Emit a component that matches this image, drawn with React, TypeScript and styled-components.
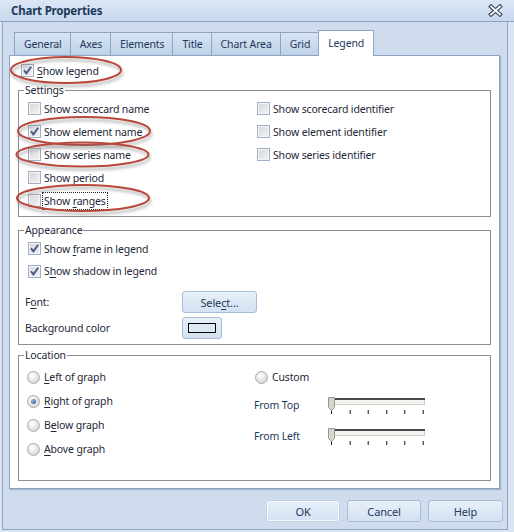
import React from "react";
import styled, { createGlobalStyle, css } from "styled-components";

const FONT = `"Noto Sans", "Open Sans", "DejaVu Sans", sans-serif`;
const INK = "#1d2838";
const NAVY = "#1e395b";
const EDGE = "#8ea4c2";

const GlobalStyle = createGlobalStyle`
  html, body { margin: 0; padding: 0; background: #d9e4f1; }
  body { font-family: ${FONT}; font-size: 10.5px; letter-spacing: -0.15px; color: ${INK}; }
  * { box-sizing: border-box; }
`;

const Window = styled.div`
  position: relative;
  width: 514px;
  height: 532px;
  display: flex;
  flex-direction: column;
  background: #dbe5f2;
  overflow: hidden;
`;

const TitleBar = styled.div`
  flex: none;
  height: 22px;
  display: flex;
  align-items: center;
  justify-content: space-between;
  padding: 0 11px;
  border-bottom: 1px solid ${EDGE};
  background: linear-gradient(#dce7f5, #c7d8ee);
  color: ${NAVY};
  font-weight: bold;
  font-size: 11.5px;
  letter-spacing: -0.2px;
`;

const Frame = styled.div`
  flex: 1;
  display: flex;
  flex-direction: column;
  margin: 0 6px 2px 2px;
  padding: 8px 0 0 6px;
  border: 1px solid ${EDGE};
  border-top: none;
  background: #cfdcee;
`;

const TabRow = styled.div`
  display: flex;
  align-items: flex-end;
  height: 25px;
  margin-left: 6px;
  position: relative;
  z-index: 1;
`;

const Tab = styled.div<{ $active?: boolean }>`
  height: 23px;
  display: flex;
  align-items: center;
  padding: 0 8px 0 9px;
  margin-left: -1px;
  border: 1px solid ${EDGE};
  border-bottom: none;
  background: linear-gradient(#d8e4f3, #bfd2ea);
  color: ${NAVY};
  ${(p) =>
    p.$active &&
    css`
      height: 26px;
      margin-bottom: -1px;
      padding: 0 9px 2px;
      background: #fff;
    `}
`;

const Panel = styled.div`
  height: 434px;
  margin-right: 7px;
  padding: 3px 8px 0;
  display: flex;
  flex-direction: column;
  background: #fff;
  border: 1px solid ${EDGE};
  box-shadow: 1px 1px 1px rgba(80, 105, 140, 0.35);
`;

const Group = styled.fieldset<{ $top: number }>`
  margin: ${(p) => p.$top}px 0 0;
  padding: 0;
  min-width: 0;
  border: 1px solid #8a8e95;
`;

const Caption = styled.legend`
  margin-left: 5px;
  padding: 0 1px;
  line-height: 14px;
  color: ${INK};
`;

const GroupBody = styled.div<{ $pad: string }>`
  padding: ${(p) => p.$pad};
`;

const SettingsGrid = styled.div`
  display: grid;
  grid-template-columns: 229px 1fr;
  grid-template-rows: repeat(5, 23px);
  grid-auto-flow: column;
`;

const LocationGrid = styled.div`
  display: grid;
  grid-template-columns: 228px 1fr;
`;

const Stack = styled.div`
  display: flex;
  flex-direction: column;
`;

const Row = styled.label<{ $h?: number; $indent?: number }>`
  display: flex;
  align-items: center;
  height: ${(p) => p.$h ?? 23}px;
  margin-left: ${(p) => p.$indent ?? 0}px;
  white-space: nowrap;
`;

const Box = styled.span`
  flex: none;
  width: 13px;
  height: 13px;
  display: flex;
  align-items: center;
  justify-content: center;
  border: 1px solid #9fb0c7;
  background: linear-gradient(135deg, #d6d6d6, #f3f3f3);
  box-shadow: inset 0 0 0 1px #f4f4f4;
`;

const Dot = styled.span<{ $on?: boolean }>`
  flex: none;
  width: 13px;
  height: 13px;
  border-radius: 50%;
  border: 1px solid #a9a9a9;
  background: radial-gradient(circle at 40% 35%, #fbfbfb 10%, #cfcfcf 90%);
  display: flex;
  align-items: center;
  justify-content: center;
  &::after {
    content: "";
    width: 5px;
    height: 5px;
    border-radius: 50%;
    background: ${(p) => (p.$on ? "radial-gradient(circle at 35% 35%, #8fb0dd, #2f4f86)" : "transparent")};
  }
`;

const Text = styled.span<{ $gap?: number; $focus?: boolean }>`
  margin-left: ${(p) => p.$gap ?? 3}px;
  line-height: 14px;
  ${(p) =>
    p.$focus &&
    css`
      outline: 1px dotted #222;
      outline-offset: 1px;
    `}
`;

const Key = styled.u`
  text-underline-offset: 2px;
`;

const FieldRow = styled.div<{ $top: number }>`
  display: flex;
  align-items: center;
  height: 22px;
  margin-top: ${(p) => p.$top}px;
`;

const FieldLabel = styled.span`
  width: 157px;
`;

const DialogButton = styled.button<{ $w: number; $primary?: boolean }>`
  width: ${(p) => p.$w}px;
  height: 22px;
  padding: 0;
  display: flex;
  align-items: center;
  justify-content: center;
  font-family: ${FONT};
  font-size: 11px;
  letter-spacing: -0.15px;
  color: ${NAVY};
  border: 1px solid #a9bcd6;
  border-radius: 3px;
  background: linear-gradient(#e8f0f9, #d3e1f2);
  ${(p) =>
    p.$primary &&
    css`
      border-color: #c3d3e7;
      box-shadow: inset 0 0 0 1px #f7fafd;
    `}
`;

const Swatch = styled.span`
  width: 28px;
  height: 10px;
  border: 1px solid #000;
  background: #dde8f5;
`;

const SliderRow = styled.div`
  display: flex;
  align-items: center;
  height: 31px;
`;

const SliderLabel = styled.span`
  width: 74px;
  margin-left: -1px;
  color: ${NAVY};
`;

const ButtonRow = styled.div`
  display: flex;
  justify-content: flex-end;
  gap: 7px;
  margin: 11px 4px 0 0;
`;

const Overlay = styled.svg`
  position: absolute;
  inset: 0;
  pointer-events: none;
`;

function CheckMark() {
  return (
    <svg width="11" height="11" viewBox="0 0 11 11">
      <path d="M2 5.2 L4.4 8.4 L9.2 1.8" fill="none" stroke="#46598a" strokeWidth="1.9" />
    </svg>
  );
}

function Check({
  checked,
  children,
  h,
  indent,
  focus,
}: {
  checked?: boolean;
  children: React.ReactNode;
  h?: number;
  indent?: number;
  focus?: boolean;
}) {
  return (
    <Row $h={h} $indent={indent}>
      <Box>{checked && <CheckMark />}</Box>
      <Text $focus={focus}>{children}</Text>
    </Row>
  );
}

function Radio({ on, children }: { on?: boolean; children: React.ReactNode }) {
  return (
    <Row $h={24}>
      <Dot $on={on} />
      <Text $gap={4}>{children}</Text>
    </Row>
  );
}

function Slider() {
  const ticks = [3, 21.7, 39.7, 58.3, 76.3, 94.7];
  return (
    <svg width="100" height="20" viewBox="0 0 100 20">
      <rect x="3.5" y="3.5" width="93" height="6" fill="#f3f3ef" stroke="#cfcfc7" />
      <line x1="4" y1="4" x2="97" y2="4" stroke="#4a4a4a" strokeWidth="2" />
      {ticks.map((x) => (
        <line key={x} x1={x + 0.5} y1="15" x2={x + 0.5} y2="19" stroke="#111" strokeWidth="1" />
      ))}
      <path d="M0.5 2.5 H6.5 V12.5 L3.5 15.5 L0.5 12.5 Z" fill="#d8d5cc" stroke="#9a978e" />
    </svg>
  );
}

function CloseGlyph() {
  return (
    <svg width="15" height="13" viewBox="0 0 15 13">
      <path d="M3 2.5 L12 10.5 M12 2.5 L3 10.5" stroke="#34445c" strokeWidth="4" strokeLinecap="square" />
      <path d="M3 2.5 L12 10.5 M12 2.5 L3 10.5" stroke="#fff" strokeWidth="1.8" strokeLinecap="square" />
    </svg>
  );
}

const marks = [
  { cx: 66, cy: 70, rx: 55, ry: 13 },
  { cx: 84, cy: 131, rx: 66, ry: 14 },
  { cx: 82.5, cy: 154.5, rx: 66, ry: 12 },
  { cx: 83, cy: 198, rx: 66, ry: 13 },
];

export default function App() {
  return (
    <>
      <GlobalStyle />
      <Window>
        <TitleBar>
          <span>Chart Properties</span>
          <CloseGlyph />
        </TitleBar>
        <Frame>
          <TabRow>
            {["General", "Axes", "Elements", "Title", "Chart Area", "Grid"].map((t) => (
              <Tab key={t}>{t}</Tab>
            ))}
            <Tab $active>Legend</Tab>
          </TabRow>
          <Panel>
            <Check checked indent={3}>
              <Key>S</Key>how legend
            </Check>

            <Group $top={1}>
              <Caption>Settings</Caption>
              <GroupBody $pad="0 0 4px 9px">
                <SettingsGrid>
                  <Check>Show scorecard name</Check>
                  <Check checked>Show element name</Check>
                  <Check>Show series name</Check>
                  <Check>Show period</Check>
                  <Check focus>
                    Show <Key>r</Key>anges
                  </Check>
                  <Check>Show scorecard identifier</Check>
                  <Check>Show element identifier</Check>
                  <Check>Show series identifier</Check>
                </SettingsGrid>
              </GroupBody>
            </Group>

            <Group $top={6}>
              <Caption>Appearance</Caption>
              <GroupBody $pad="0 0 5px 6px">
                <Check checked indent={3}>
                  Show <Key>f</Key>rame in legend
                </Check>
                <Check checked indent={3} h={22}>
                  S<Key>h</Key>ow shadow in legend
                </Check>
                <FieldRow $top={9}>
                  <FieldLabel>
                    F<Key>o</Key>nt:
                  </FieldLabel>
                  <DialogButton $w={75}>
                    Sele<Key>c</Key>t...
                  </DialogButton>
                </FieldRow>
                <FieldRow $top={4}>
                  <FieldLabel>Background color</FieldLabel>
                  <DialogButton $w={40}>
                    <Swatch />
                  </DialogButton>
                </FieldRow>
              </GroupBody>
            </Group>

            <Group $top={3}>
              <Caption>Location</Caption>
              <GroupBody $pad="3px 0 19px 8px">
                <LocationGrid>
                  <Stack>
                    <Radio>
                      <Key>L</Key>eft of graph
                    </Radio>
                    <Radio on>
                      <Key>R</Key>ight of graph
                    </Radio>
                    <Radio>
                      B<Key>e</Key>low graph
                    </Radio>
                    <Radio>
                      <Key>A</Key>bove graph
                    </Radio>
                  </Stack>
                  <Stack>
                    <Radio>Custom</Radio>
                    <SliderRow>
                      <SliderLabel>From Top</SliderLabel>
                      <Slider />
                    </SliderRow>
                    <SliderRow>
                      <SliderLabel>From Left</SliderLabel>
                      <Slider />
                    </SliderRow>
                  </Stack>
                </LocationGrid>
              </GroupBody>
            </Group>
          </Panel>
          <ButtonRow>
            <DialogButton $w={74} $primary>
              OK
            </DialogButton>
            <DialogButton $w={74}>Cancel</DialogButton>
            <DialogButton $w={75}>Help</DialogButton>
          </ButtonRow>
        </Frame>
        <Overlay width="514" height="532" viewBox="0 0 514 532">
          <defs>
            <filter id="inkShadow" x="-10%" y="-30%" width="120%" height="180%">
              <feDropShadow dx="1" dy="3" stdDeviation="1.6" floodColor="#6d6d6d" floodOpacity="0.55" />
            </filter>
          </defs>
          {marks.map((m, i) => (
            <ellipse
              key={i}
              cx={m.cx}
              cy={m.cy}
              rx={m.rx}
              ry={m.ry}
              fill="none"
              stroke="#b9473a"
              strokeWidth="2"
              filter="url(#inkShadow)"
            />
          ))}
        </Overlay>
      </Window>
    </>
  );
}
